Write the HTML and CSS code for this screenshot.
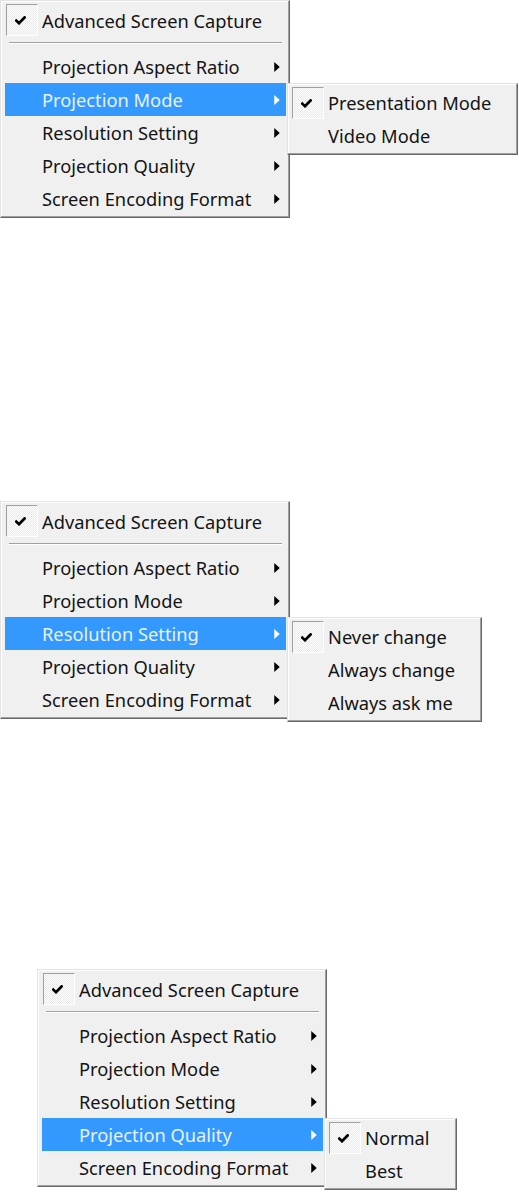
FILE: index.html
```html
<!DOCTYPE html>
<html>
<head>
<meta charset="utf-8">
<link rel="stylesheet" href="styles.css">
</head>
<body>
<div class="page">

  <div class="shot shot-a">
    <div class="menu menu-main">
      <div class="row row-top">
        <div class="check"><span class="box"><svg class="tick" width="11" height="9" viewBox="0 0 11 9"><path d="M1.3 4.6 L4 7.2 L9.6 1.4" /></svg></span></div>
        <div class="label">Advanced Screen Capture</div>
      </div>
      <div class="sep"></div>
      <div class="row"><div class="check"></div><div class="label">Projection Aspect Ratio</div><svg class="arrow" width="5" height="9" viewBox="0 0 5 9"><polygon points="0,0 5,4.5 0,9"/></svg></div>
      <div class="row is-active"><div class="check"></div><div class="label">Projection Mode</div><svg class="arrow" width="5" height="9" viewBox="0 0 5 9"><polygon points="0,0 5,4.5 0,9"/></svg>
        <div class="menu submenu sub-a">
          <div class="row"><div class="check"><span class="box"><svg class="tick" width="11" height="9" viewBox="0 0 11 9"><path d="M1.3 4.6 L4 7.2 L9.6 1.4" /></svg></span></div><div class="label">Presentation Mode</div></div>
          <div class="row"><div class="check"></div><div class="label">Video Mode</div></div>
        </div>
      </div>
      <div class="row"><div class="check"></div><div class="label">Resolution Setting</div><svg class="arrow" width="5" height="9" viewBox="0 0 5 9"><polygon points="0,0 5,4.5 0,9"/></svg></div>
      <div class="row"><div class="check"></div><div class="label">Projection Quality</div><svg class="arrow" width="5" height="9" viewBox="0 0 5 9"><polygon points="0,0 5,4.5 0,9"/></svg></div>
      <div class="row"><div class="check"></div><div class="label">Screen Encoding Format</div><svg class="arrow" width="5" height="9" viewBox="0 0 5 9"><polygon points="0,0 5,4.5 0,9"/></svg></div>
    </div>
  </div>

  <div class="shot shot-b">
    <div class="menu menu-main">
      <div class="row row-top">
        <div class="check"><span class="box"><svg class="tick" width="11" height="9" viewBox="0 0 11 9"><path d="M1.3 4.6 L4 7.2 L9.6 1.4" /></svg></span></div>
        <div class="label">Advanced Screen Capture</div>
      </div>
      <div class="sep"></div>
      <div class="row"><div class="check"></div><div class="label">Projection Aspect Ratio</div><svg class="arrow" width="5" height="9" viewBox="0 0 5 9"><polygon points="0,0 5,4.5 0,9"/></svg></div>
      <div class="row"><div class="check"></div><div class="label">Projection Mode</div><svg class="arrow" width="5" height="9" viewBox="0 0 5 9"><polygon points="0,0 5,4.5 0,9"/></svg></div>
      <div class="row is-active"><div class="check"></div><div class="label">Resolution Setting</div><svg class="arrow" width="5" height="9" viewBox="0 0 5 9"><polygon points="0,0 5,4.5 0,9"/></svg>
        <div class="menu submenu sub-b">
          <div class="row"><div class="check"><span class="box"><svg class="tick" width="11" height="9" viewBox="0 0 11 9"><path d="M1.3 4.6 L4 7.2 L9.6 1.4" /></svg></span></div><div class="label">Never change</div></div>
          <div class="row"><div class="check"></div><div class="label">Always change</div></div>
          <div class="row"><div class="check"></div><div class="label">Always ask me</div></div>
        </div>
      </div>
      <div class="row"><div class="check"></div><div class="label">Projection Quality</div><svg class="arrow" width="5" height="9" viewBox="0 0 5 9"><polygon points="0,0 5,4.5 0,9"/></svg></div>
      <div class="row"><div class="check"></div><div class="label">Screen Encoding Format</div><svg class="arrow" width="5" height="9" viewBox="0 0 5 9"><polygon points="0,0 5,4.5 0,9"/></svg></div>
    </div>
  </div>

  <div class="shot shot-c">
    <div class="menu menu-main">
      <div class="row row-top">
        <div class="check"><span class="box"><svg class="tick" width="11" height="9" viewBox="0 0 11 9"><path d="M1.3 4.6 L4 7.2 L9.6 1.4" /></svg></span></div>
        <div class="label">Advanced Screen Capture</div>
      </div>
      <div class="sep"></div>
      <div class="row"><div class="check"></div><div class="label">Projection Aspect Ratio</div><svg class="arrow" width="5" height="9" viewBox="0 0 5 9"><polygon points="0,0 5,4.5 0,9"/></svg></div>
      <div class="row"><div class="check"></div><div class="label">Projection Mode</div><svg class="arrow" width="5" height="9" viewBox="0 0 5 9"><polygon points="0,0 5,4.5 0,9"/></svg></div>
      <div class="row"><div class="check"></div><div class="label">Resolution Setting</div><svg class="arrow" width="5" height="9" viewBox="0 0 5 9"><polygon points="0,0 5,4.5 0,9"/></svg></div>
      <div class="row is-active"><div class="check"></div><div class="label">Projection Quality</div><svg class="arrow" width="5" height="9" viewBox="0 0 5 9"><polygon points="0,0 5,4.5 0,9"/></svg>
        <div class="menu submenu sub-c">
          <div class="row"><div class="check"><span class="box"><svg class="tick" width="11" height="9" viewBox="0 0 11 9"><path d="M1.3 4.6 L4 7.2 L9.6 1.4" /></svg></span></div><div class="label">Normal</div></div>
          <div class="row"><div class="check"></div><div class="label">Best</div></div>
        </div>
      </div>
      <div class="row"><div class="check"></div><div class="label">Screen Encoding Format</div><svg class="arrow" width="5" height="9" viewBox="0 0 5 9"><polygon points="0,0 5,4.5 0,9"/></svg></div>
    </div>
  </div>

</div>
</body>
</html>
```

FILE: styles.css
```css
* { box-sizing: border-box; }

html, body {
  margin: 0;
  padding: 0;
  background: #ffffff;
}

body {
  font-family: "Noto Sans", "Open Sans", sans-serif;
  font-size: 18.3px;
  color: #141414;
}

.page {
  width: 519px;
  height: 1193px;
  overflow: hidden;
  display: flex;
  flex-direction: column;
}

.shot {
  display: flex;
  align-items: flex-start;
}

.shot-b { margin-top: 283px; }
.shot-c { margin-top: 250px; padding-left: 37px; }

.menu {
  background: #f0f0f0;
  border: 1px solid;
  border-color: #e3e3e3 #696969 #696969 #e3e3e3;
  box-shadow: inset -1px -1px 0 #a0a0a0, inset 1px 1px 0 #ffffff;
  display: flex;
  flex-direction: column;
}

.menu-main {
  width: 290px;
  padding: 2px 3px 2px 4px;
}

.row {
  position: relative;
  display: flex;
  align-items: center;
  height: 33px;
  white-space: nowrap;
}

.row-top { height: 34px; }

.check {
  flex: none;
  width: 37px;
  height: 100%;
  display: flex;
  align-items: center;
  padding-left: 1px;
}

.box {
  width: 32px;
  height: 32px;
  display: flex;
  align-items: center;
  justify-content: center;
  border-top: 1px solid #a0a0a0;
  border-left: 1px solid #a0a0a0;
  border-right: 1px solid #ffffff;
  border-bottom: 1px solid #ffffff;
  background: repeating-conic-gradient(#ffffff 0 25%, #e9e9e9 0 50%) 0 0 / 2px 2px;
  padding-right: 3px;
  padding-top: 1px;
}

.tick path {
  fill: none;
  stroke: #000;
  stroke-width: 2.7;
  stroke-linecap: square;
  stroke-linejoin: miter;
}

.label {
  flex: 1;
  line-height: 33px;
}

.arrow {
  flex: none;
  width: 6px;
  height: 10px;
  margin-right: 6px;
  fill: #000;
}

.sep {
  height: 13px;
  margin: 0 4px 0 4px;
  padding-top: 5px;
}

.sep::before {
  content: "";
  display: block;
  height: 1px;
  background: #a0a0a0;
  border-bottom: 1px solid #ffffff;
  box-sizing: content-box;
}

.is-active {
  background: #3399ff;
  color: #e8f1fc;
}

.is-active > .arrow { fill: #ffffff; }

.submenu {
  position: absolute;
  top: 0;
  left: calc(100% + 1px);
  padding: 2px 3px 2px 3px;
  color: #141414;
  z-index: 2;
}

.sub-a { width: 231px; }
.sub-b { width: 195px; }
.sub-c { width: 133px; }
```
